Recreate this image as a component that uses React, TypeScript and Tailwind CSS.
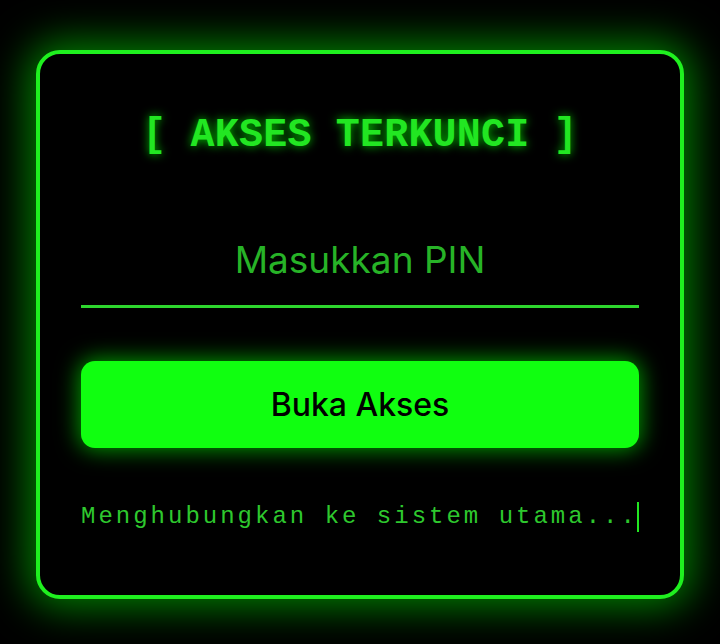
import React from "react";

export default function App() {
  return (
    <div className="w-[720px] h-[644px] bg-black flex items-start justify-center pt-[50px]">
      <div className="w-[648px] h-[549px] rounded-[24px] border-[4px] border-[#1ff01f] bg-black shadow-[0_0_40px_8px_rgba(0,255,0,0.5)] px-[41px] pt-[56px] flex flex-col">
        <h1
          className="text-center text-[40px] leading-[52px] font-bold tracking-[0.2px] text-[#22e622] [text-shadow:0_0_10px_rgba(0,255,0,0.8)]"
          style={{ fontFamily: '"Courier New", "Liberation Mono", monospace' }}
        >
          [ AKSES TERKUNCI ]
        </h1>
        <input
          type="password"
          placeholder="Masukkan PIN"
          className="mt-[52px] h-[94px] w-full bg-transparent border-b-[3px] border-[#2ed62e] text-center text-[37px] text-[#27b327] placeholder:text-[#27b327] outline-none"
          style={{ fontFamily: 'Inter, "Liberation Sans", sans-serif' }}
        />
        <button
          className="mt-[53px] h-[87px] w-full rounded-[14px] bg-[#10ff10] text-black text-[32px] font-medium shadow-[0_0_22px_2px_rgba(0,255,0,0.6)]"
          style={{ fontFamily: 'Inter, "Liberation Sans", sans-serif' }}
        >
          Buka Akses
        </button>
        <div className="mt-[54px] flex items-center">
          <span
            className="text-[24px] leading-[30px] tracking-[3px] text-[#2ec82e] whitespace-nowrap"
            style={{ fontFamily: '"Courier New", "Liberation Mono", monospace' }}
          >
            Menghubungkan ke sistem utama...
          </span>
          <span className="ml-[-1px] w-[3px] h-[30px] bg-[#22e622]" />
        </div>
      </div>
    </div>
  );
}
